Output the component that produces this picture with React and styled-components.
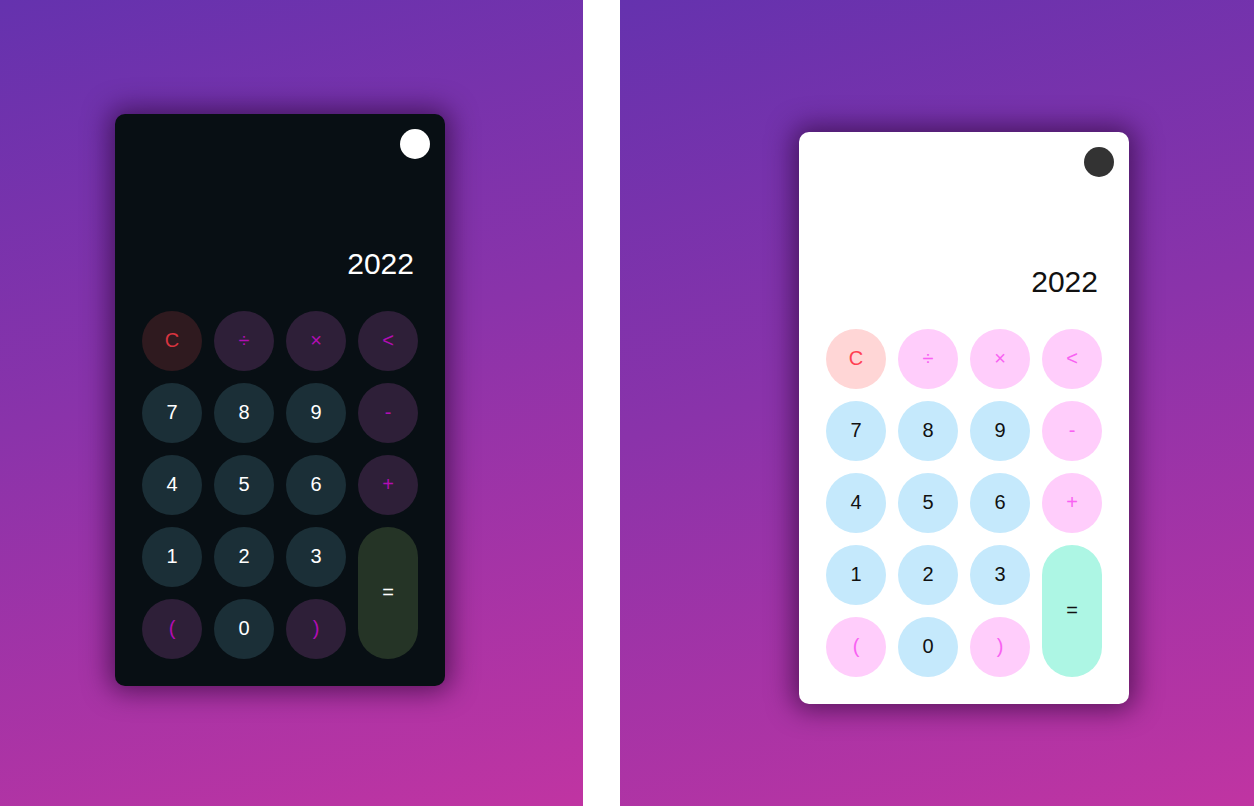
import React from "react";
import styled, { createGlobalStyle } from "styled-components";

const Global = createGlobalStyle`
  html, body { margin: 0; padding: 0; background: #ffffff; }
  body { font-family: "Liberation Sans", Arial, sans-serif; }
`;

const themes = {
  dark: {
    card: "#080f14",
    toggle: "#ffffff",
    display: "#ffffff",
    digitBg: "#1b2f37",
    digitFg: "#ffffff",
    opBg: "#2e1f38",
    opFg: "#b20db3",
    clearBg: "#2f1a1f",
    clearFg: "#d8343f",
    eqBg: "#253426",
    eqFg: "#ffffff",
  },
  light: {
    card: "#ffffff",
    toggle: "#333333",
    display: "#111111",
    digitBg: "#c5e9fc",
    digitFg: "#111111",
    opBg: "#ffcdfb",
    opFg: "#f862f2",
    clearBg: "#ffd6d6",
    clearFg: "#ff4052",
    eqBg: "#adf6e4",
    eqFg: "#111111",
  },
};

const Page = styled.div`
  display: flex;
  gap: 37px;
  width: 1254px;
  height: 806px;
  overflow: hidden;
`;

const Panel = styled.section`
  width: ${(p) => p.$width}px;
  height: 806px;
  flex-shrink: 0;
  box-sizing: border-box;
  padding-top: ${(p) => p.$top}px;
  padding-left: ${(p) => p.$left}px;
  background: linear-gradient(165deg, #6532ae 0%, #8a33aa 45%, #c034a2 100%);
`;

const Card = styled.div`
  width: 330px;
  height: 572px;
  box-sizing: border-box;
  padding: 15px 15px 27px;
  border-radius: 10px;
  background: ${(p) => p.$t.card};
  box-shadow: 0 0 26px 6px rgba(40, 5, 50, 0.62);
  display: flex;
  flex-direction: column;
`;

const TopBar = styled.div`
  display: flex;
  justify-content: flex-end;
`;

const Toggle = styled.button`
  width: 30px;
  height: 30px;
  border-radius: 50%;
  border: none;
  padding: 0;
  background: ${(p) => p.$t.toggle};
`;

const Display = styled.div`
  height: 120px;
  margin-bottom: 32px;
  padding-right: 16px;
  display: flex;
  align-items: flex-end;
  justify-content: flex-end;
  font-size: 30px;
  line-height: 30px;
  color: ${(p) => p.$t.display};
`;

const Keys = styled.div`
  margin: 0 12px;
  display: grid;
  grid-template-columns: repeat(4, 60px);
  grid-auto-rows: 60px;
  gap: 12px;
`;

const Key = styled.button`
  border: none;
  padding: 0 0 2px;
  border-radius: 30px;
  font-family: "Liberation Sans", Arial, sans-serif;
  font-size: 20px;
  display: flex;
  align-items: center;
  justify-content: center;
  background: ${(p) => p.$t[p.$kind + "Bg"]};
  color: ${(p) => p.$t[p.$kind + "Fg"]};
  grid-row: ${(p) => (p.$tall ? "span 2" : "auto")};
  grid-column: ${(p) => (p.$tall ? "4" : "auto")};
`;

const keys = [
  ["C", "clear"], ["÷", "op"], ["×", "op"], ["<", "op"],
  ["7", "digit"], ["8", "digit"], ["9", "digit"], ["-", "op"],
  ["4", "digit"], ["5", "digit"], ["6", "digit"], ["+", "op"],
  ["1", "digit"], ["2", "digit"], ["3", "digit"], ["=", "eq", true],
  ["(", "op"], ["0", "digit"], [")", "op"],
];

function Calculator({ t }) {
  return (
    <Card $t={t}>
      <TopBar>
        <Toggle $t={t} aria-label="toggle theme" />
      </TopBar>
      <Display $t={t}>2022</Display>
      <Keys>
        {keys.map(([label, kind, tall]) => (
          <Key key={label} $t={t} $kind={kind} $tall={tall}>
            {label}
          </Key>
        ))}
      </Keys>
    </Card>
  );
}

export default function App() {
  return (
    <>
      <Global />
      <Page>
        <Panel $width={583} $top={114} $left={115}>
          <Calculator t={themes.dark} />
        </Panel>
        <Panel $width={634} $top={132} $left={179}>
          <Calculator t={themes.light} />
        </Panel>
      </Page>
    </>
  );
}
